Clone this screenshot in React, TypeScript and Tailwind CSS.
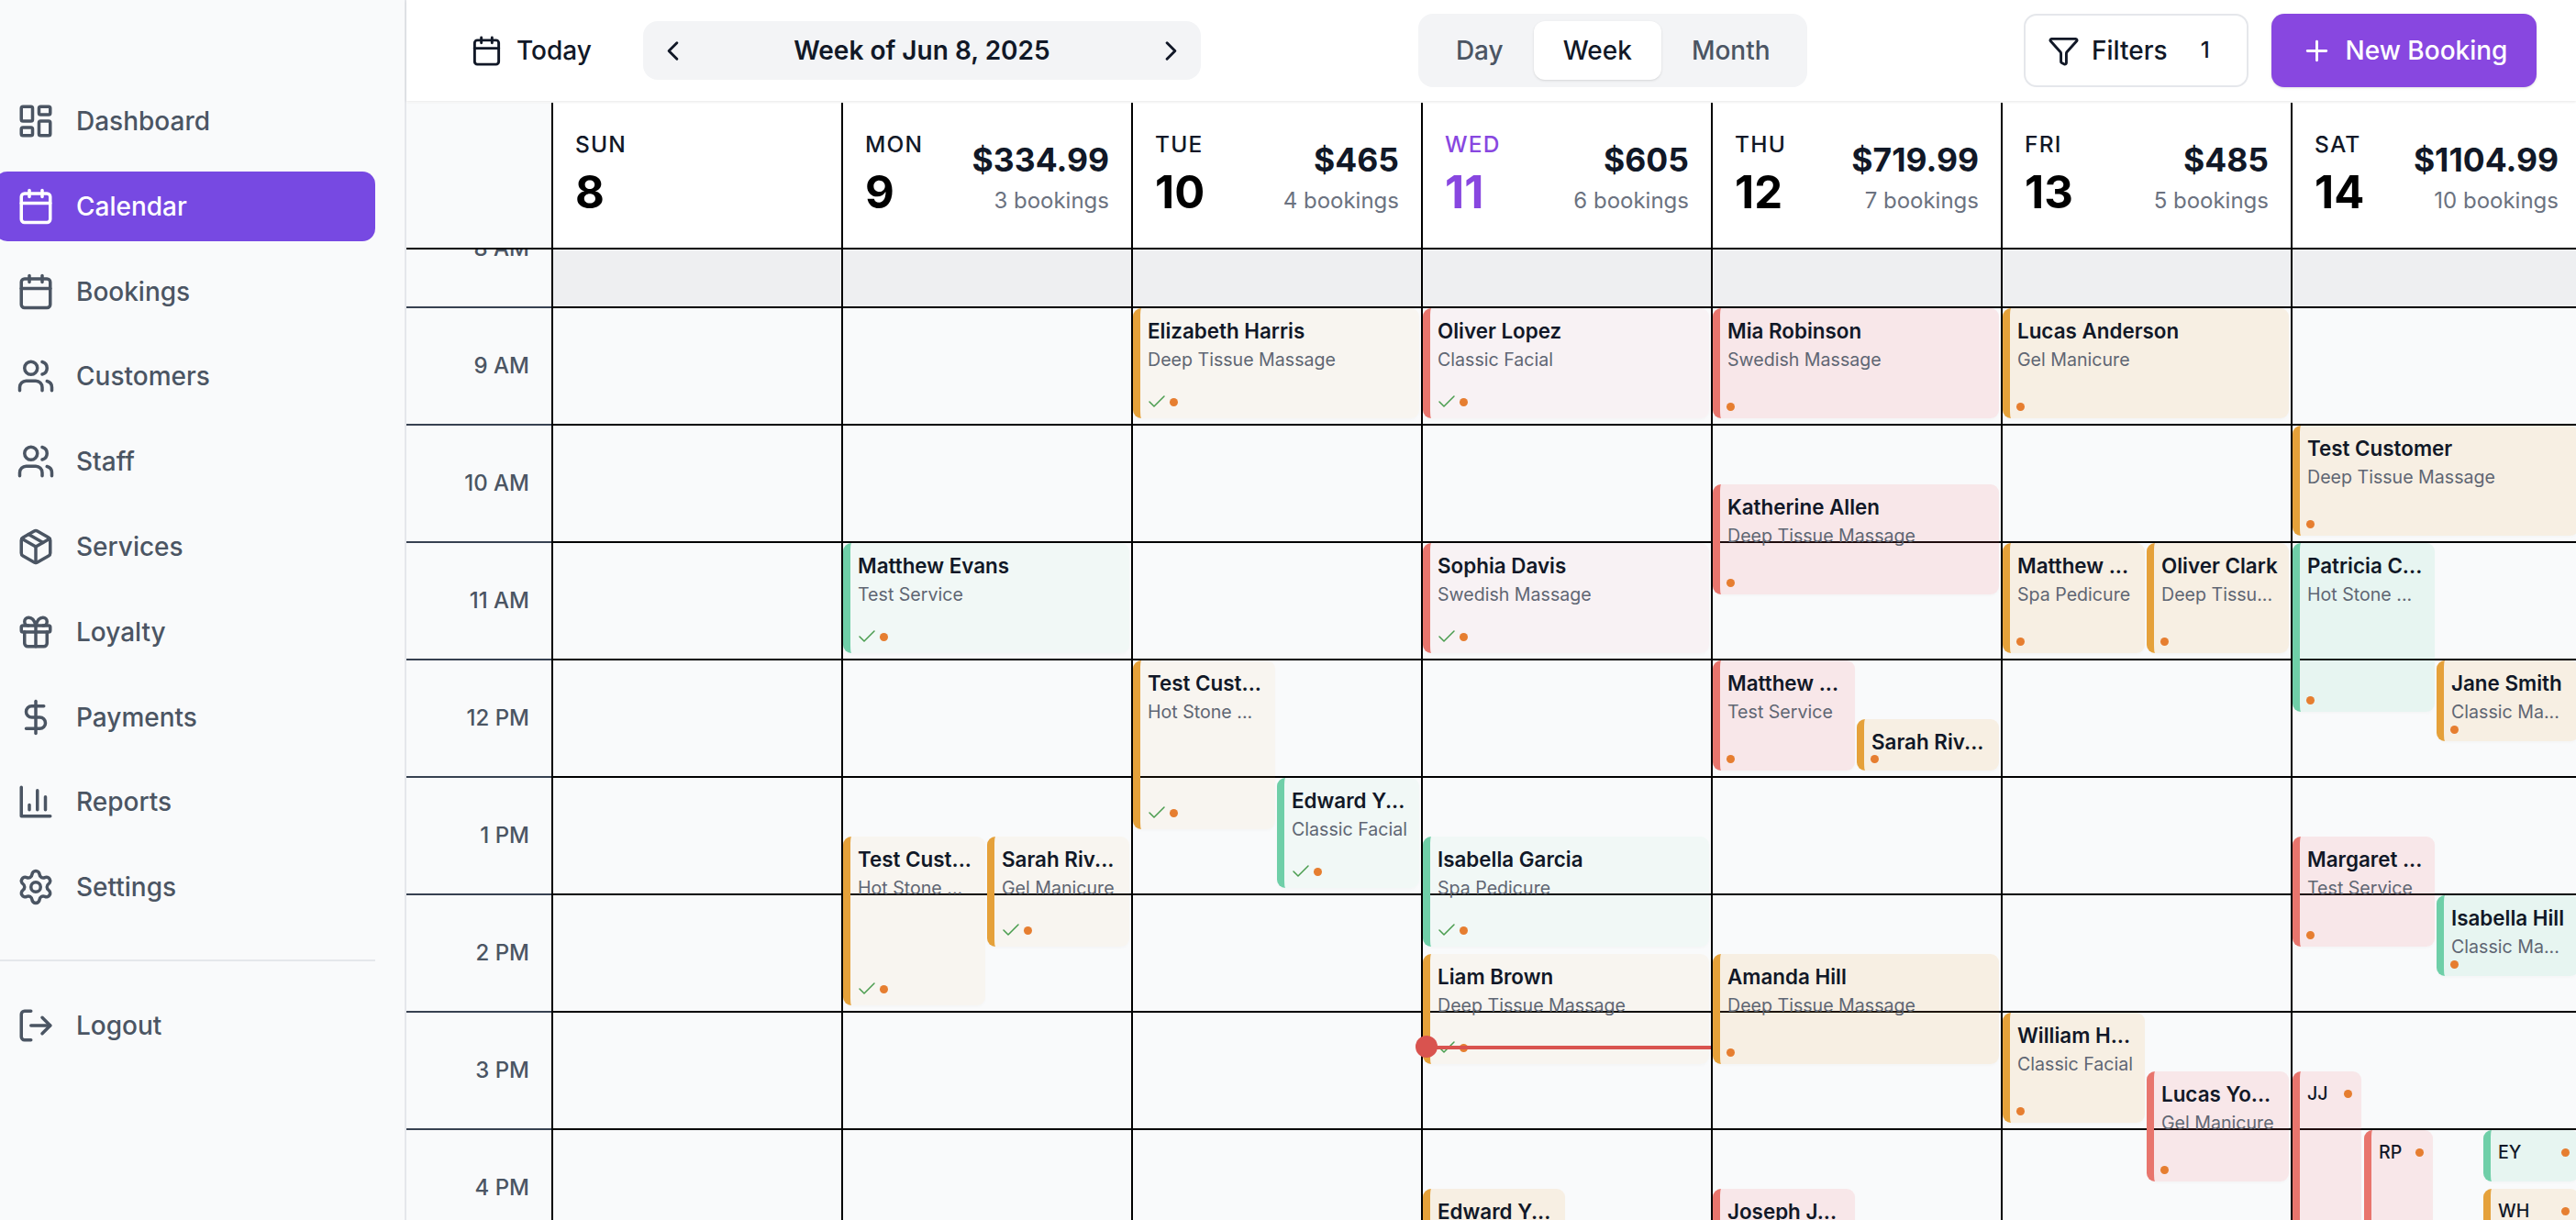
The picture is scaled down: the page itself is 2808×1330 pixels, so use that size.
import {
  Calendar,
  Check,
  ChevronLeft,
  ChevronRight,
  DollarSign,
  Funnel,
  Gift,
  LayoutDashboard,
  LogOut,
  Package,
  Plus,
  Settings,
  Users,
} from 'lucide-react';
import type { ComponentType } from 'react';

type IconType = ComponentType<{ size?: number; className?: string; strokeWidth?: number }>;
type Tone = 'amber' | 'red' | 'green';

interface Booking {
  name: string;
  service?: string;
  start: number; // hours, 24h clock
  mins: number;
  tone: Tone;
  done?: boolean;
  left?: number;
  width?: number;
  mini?: boolean;
}

const HOUR = 128;
const FULL = 312;
const HALF = 155;
const RIGHT = 157;

function ReportsIcon({ size = 42, className }: { size?: number; className?: string }) {
  return (
    <svg
      width={size}
      height={size}
      viewBox="0 0 24 24"
      fill="none"
      stroke="currentColor"
      strokeWidth="2"
      strokeLinecap="round"
      strokeLinejoin="round"
      className={className}
    >
      <path d="M3 3v18h18" />
      <path d="M18 17V9" />
      <path d="M13 17V5" />
      <path d="M8 17v-3" />
    </svg>
  );
}

const NAV: { label: string; icon: IconType; active?: boolean }[] = [
  { label: 'Dashboard', icon: LayoutDashboard },
  { label: 'Calendar', icon: Calendar, active: true },
  { label: 'Bookings', icon: Calendar },
  { label: 'Customers', icon: Users },
  { label: 'Staff', icon: Users },
  { label: 'Services', icon: Package },
  { label: 'Loyalty', icon: Gift },
  { label: 'Payments', icon: DollarSign },
  { label: 'Reports', icon: ReportsIcon },
  { label: 'Settings', icon: Settings },
];

const HOURS = ['8 AM', '9 AM', '10 AM', '11 AM', '12 PM', '1 PM', '2 PM', '3 PM', '4 PM'];

const DAYS: {
  label: string;
  date: number;
  amount?: string;
  count?: string;
  today?: boolean;
  bookings: Booking[];
}[] = [
  { label: 'SUN', date: 8, bookings: [] },
  {
    label: 'MON',
    date: 9,
    amount: '$334.99',
    count: '3 bookings',
    bookings: [
      { name: 'Matthew Evans', service: 'Test Service', start: 11, mins: 60, tone: 'green', done: true },
      { name: 'Test Cust...', service: 'Hot Stone ...', start: 13.5, mins: 90, tone: 'amber', done: true, width: HALF },
      { name: 'Sarah Riv...', service: 'Gel Manicure', start: 13.5, mins: 60, tone: 'amber', done: true, left: RIGHT, width: HALF },
    ],
  },
  {
    label: 'TUE',
    date: 10,
    amount: '$465',
    count: '4 bookings',
    bookings: [
      { name: 'Elizabeth Harris', service: 'Deep Tissue Massage', start: 9, mins: 60, tone: 'amber', done: true },
      { name: 'Test Cust...', service: 'Hot Stone ...', start: 12, mins: 90, tone: 'amber', done: true, width: HALF },
      { name: 'Edward Y...', service: 'Classic Facial', start: 13, mins: 60, tone: 'green', done: true, left: RIGHT, width: HALF },
    ],
  },
  {
    label: 'WED',
    date: 11,
    amount: '$605',
    count: '6 bookings',
    today: true,
    bookings: [
      { name: 'Oliver Lopez', service: 'Classic Facial', start: 9, mins: 60, tone: 'red', done: true },
      { name: 'Sophia Davis', service: 'Swedish Massage', start: 11, mins: 60, tone: 'red', done: true },
      { name: 'Isabella Garcia', service: 'Spa Pedicure', start: 13.5, mins: 60, tone: 'green', done: true },
      { name: 'Liam Brown', service: 'Deep Tissue Massage', start: 14.5, mins: 60, tone: 'amber', done: true },
      { name: 'Edward Y...', service: 'Classic Facial', start: 16.5, mins: 60, tone: 'amber', width: HALF },
    ],
  },
  {
    label: 'THU',
    date: 12,
    amount: '$719.99',
    count: '7 bookings',
    bookings: [
      { name: 'Mia Robinson', service: 'Swedish Massage', start: 9, mins: 60, tone: 'red' },
      { name: 'Katherine Allen', service: 'Deep Tissue Massage', start: 10.5, mins: 60, tone: 'red' },
      { name: 'Matthew ...', service: 'Test Service', start: 12, mins: 60, tone: 'red', width: HALF },
      { name: 'Sarah Riv...', start: 12.5, mins: 30, tone: 'amber', left: RIGHT, width: HALF },
      { name: 'Amanda Hill', service: 'Deep Tissue Massage', start: 14.5, mins: 60, tone: 'amber' },
      { name: 'Joseph J...', service: 'Test Service', start: 16.5, mins: 60, tone: 'red', width: HALF },
    ],
  },
  {
    label: 'FRI',
    date: 13,
    amount: '$485',
    count: '5 bookings',
    bookings: [
      { name: 'Lucas Anderson', service: 'Gel Manicure', start: 9, mins: 60, tone: 'amber' },
      { name: 'Matthew ...', service: 'Spa Pedicure', start: 11, mins: 60, tone: 'amber', width: HALF },
      { name: 'Oliver Clark', service: 'Deep Tissu...', start: 11, mins: 60, tone: 'amber', left: RIGHT, width: HALF },
      { name: 'William H...', service: 'Classic Facial', start: 15, mins: 60, tone: 'amber', width: HALF },
      { name: 'Lucas Yo...', service: 'Gel Manicure', start: 15.5, mins: 60, tone: 'red', left: RIGHT, width: HALF },
    ],
  },
  {
    label: 'SAT',
    date: 14,
    amount: '$1104.99',
    count: '10 bookings',
    bookings: [
      { name: 'Test Customer', service: 'Deep Tissue Massage', start: 10, mins: 60, tone: 'amber' },
      { name: 'Patricia C...', service: 'Hot Stone ...', start: 11, mins: 90, tone: 'green', width: HALF },
      { name: 'Jane Smith', service: 'Classic Ma...', start: 12, mins: 45, tone: 'amber', left: RIGHT, width: HALF },
      { name: 'Margaret ...', service: 'Test Service', start: 13.5, mins: 60, tone: 'red', width: HALF },
      { name: 'Isabella Hill', service: 'Classic Ma...', start: 14, mins: 45, tone: 'green', left: RIGHT, width: HALF },
      { name: 'JJ', start: 15.5, mins: 90, tone: 'red', width: 75, mini: true },
      { name: 'RP', start: 16, mins: 60, tone: 'red', left: 78, width: 75, mini: true },
      { name: 'EY', start: 16, mins: 30, tone: 'green', left: 208, width: 104, mini: true },
      { name: 'WH', start: 16.5, mins: 30, tone: 'amber', left: 208, width: 104, mini: true },
    ],
  },
];

const TONES: Record<Tone, { open: string; done: string }> = {
  amber: {
    open: 'border-[#e5a13a] bg-[rgba(236,165,58,0.12)]',
    done: 'border-[#e5a13a] bg-[rgba(236,165,58,0.055)]',
  },
  red: {
    open: 'border-[#e8756d] bg-[rgba(245,100,110,0.12)]',
    done: 'border-[#e8756d] bg-[rgba(245,100,110,0.05)]',
  },
  green: {
    open: 'border-[#6fcfa8] bg-[rgba(111,215,170,0.12)]',
    done: 'border-[#6fcfa8] bg-[rgba(111,215,170,0.055)]',
  },
};

function Sidebar() {
  return (
    <aside className="flex h-full w-[443px] shrink-0 flex-col border-r-2 border-[#e5e7eb] bg-[#f9fafb] pt-[94px]">
      <nav className="flex flex-col gap-[16.8px]">
        {NAV.map(({ label, icon: Icon, active }) => (
          <a
            key={label}
            className={`-ml-[6px] flex h-[76px] w-[415px] items-center gap-[23px] rounded-[14px] pl-[24px] text-[28px] font-medium ${
              active ? 'bg-[#7749e2] text-white' : 'text-[#4b5563]'
            }`}
          >
            <Icon size={42} className="shrink-0" />
            {label}
          </a>
        ))}
      </nav>
      <div className="mt-[41px] w-[409px] border-t-2 border-[#e5e7eb] pt-[32px]">
        <a className="-ml-[6px] flex h-[76px] items-center gap-[23px] pl-[24px] text-[28px] font-medium text-[#4b5563]">
          <LogOut size={42} className="shrink-0" />
          Logout
        </a>
      </div>
    </aside>
  );
}

function TopBar() {
  return (
    <header className="relative z-20 flex h-[110px] shrink-0 items-center bg-white pl-[70px] pr-[43px] shadow-[0_1px_3px_rgba(0,0,0,0.1)]">
      <button className="flex items-center gap-[15px] text-[28px] font-medium text-[#111827]">
        <Calendar size={35} />
        Today
      </button>
      <div className="ml-[56px] flex h-[64px] w-[608px] items-center justify-between rounded-[16px] bg-[#f3f4f6] px-[15px] text-[#111827]">
        <ChevronLeft size={35} />
        <span className="text-[28px] font-semibold">Week of Jun 8, 2025</span>
        <ChevronRight size={35} />
      </div>
      <div className="ml-[237px] flex h-[80px] w-[424px] items-center rounded-[16px] bg-[#f3f4f6] px-[8px] text-[28px] font-medium text-[#4b5563]">
        <span className="px-[33px]">Day</span>
        <span className="flex h-[64px] items-center rounded-[12px] bg-white px-[32px] text-[#111827] shadow-sm">Week</span>
        <span className="px-[33px]">Month</span>
      </div>
      <div className="ml-auto flex items-center gap-[25px]">
        <button className="flex h-[80px] w-[245px] items-center rounded-[14px] border-2 border-[#e5e7eb] bg-white pl-[24px] text-[28px] font-medium text-[#111827]">
          <Funnel size={35} />
          <span className="ml-[13px]">Filters</span>
          <span className="ml-[36px] text-[24px]">1</span>
        </button>
        <button className="flex h-[80px] w-[289px] items-center justify-center gap-[14px] rounded-[14px] bg-[#8847e0] text-[28px] font-medium text-white shadow-sm">
          <Plus size={35} />
          New Booking
        </button>
      </div>
    </header>
  );
}

function BookingCard({ booking }: { booking: Booking }) {
  const { name, service, start, mins, tone, done, left = 0, width = FULL, mini } = booking;
  const colors = TONES[tone];
  const top = (start - 8) * HOUR;
  const height = (mins / 60) * HOUR - 8;

  return (
    <div
      className={`absolute z-10 overflow-hidden rounded-[9px] border-l-[8px] shadow-[0_2px_3px_rgba(0,0,0,0.02)] ${done ? colors.done : colors.open}`}
      style={{ top, left, width, height }}
    >
      {mini ? (
        <div className="flex items-center justify-between pl-[8px] pr-[10px] pt-[11px] text-[19.6px] font-medium leading-[26px] text-[#111827]">
          {name}
          <span className="h-[9px] w-[9px] rounded-full bg-[#e67e30]" />
        </div>
      ) : (
        <div className="pl-[8px] pt-[12px]">
          <div className="whitespace-nowrap text-[22.4px] font-semibold leading-[26px] text-[#111827]">{name}</div>
          {service && (
            <div className="mt-[5px] whitespace-nowrap text-[19.6px] leading-[26px] text-[#5f6673]">{service}</div>
          )}
        </div>
      )}
      {!mini && (
        <div className={`absolute flex items-center gap-[2px] ${done ? 'bottom-[6px] left-[6px]' : 'bottom-[8px] left-[7px]'}`}>
          {done && <Check size={24} strokeWidth={1.5} className="text-[#4a9d4f]" />}
          <span className="h-[9px] w-[9px] rounded-full bg-[#e67e30]" />
        </div>
      )}
    </div>
  );
}

function WeekGrid() {
  return (
    <div className="flex min-h-0 flex-1 flex-col overflow-hidden">
      <div className="relative z-10 flex h-[160px] shrink-0 border-b-2 border-black bg-white">
        <div className="w-[160px] shrink-0 border-r-2 border-black bg-[#f9fafb]" />
        {DAYS.map((day) => (
          <div key={day.label} className="flex w-[316px] shrink-0 justify-between border-r-2 border-black pl-[24px] pr-[24px]">
            <div className="pt-[30px]">
              <div className={`text-[24.5px] font-medium leading-[30px] tracking-[1.2px] ${day.today ? 'text-[#8847e0]' : 'text-[#111827]'}`}>
                {day.label}
              </div>
              <div className={`mt-[11px] text-[49px] font-bold leading-[54px] ${day.today ? 'text-[#8847e0]' : 'text-black'}`}>
                {day.date}
              </div>
            </div>
            {day.amount && (
              <div className="pt-[43px] text-right">
                <div className="text-[35.5px] font-bold leading-[40px] text-[#111827]">{day.amount}</div>
                <div className="mt-[9px] whitespace-nowrap text-[24px] leading-[30px] text-[#6b7280]">{day.count}</div>
              </div>
            )}
          </div>
        ))}
      </div>
      <div className="-mt-[64px] flex shrink-0 bg-[#f9fafb]">
        <div className="w-[160px] shrink-0 border-r-2 border-black">
          {HOURS.map((hour) => (
            <div
              key={hour}
              className="flex h-[128px] items-center justify-end border-b-2 border-[#374151] pr-[24px] text-[24px] font-medium text-[#4b5563]"
            >
              {hour}
            </div>
          ))}
        </div>
        {DAYS.map((day) => (
          <div key={day.label} className="relative w-[316px] shrink-0 border-r-2 border-black">
            {HOURS.map((hour, i) => (
              <div key={hour} className={`h-[128px] border-b-2 border-black ${i === 0 ? 'bg-[#eeeff1]' : ''}`} />
            ))}
            {day.bookings.map((b) => (
              <BookingCard key={b.name + b.start} booking={b} />
            ))}
            {day.today && (
              <div className="absolute left-0 right-0 top-[932px] z-10 h-[4px] bg-[#d9534f]">
                <span className="absolute -left-[8px] -top-[11px] h-[24px] w-[24px] rounded-full bg-[#d9534f]" />
              </div>
            )}
          </div>
        ))}
      </div>
    </div>
  );
}

export default function App() {
  return (
    <div className="flex h-screen w-screen overflow-hidden bg-white [font-family:Inter,sans-serif]">
      <Sidebar />
      <main className="flex min-w-0 flex-1 flex-col">
        <TopBar />
        <div className="h-[2px] shrink-0 bg-white" />
        <WeekGrid />
      </main>
    </div>
  );
}
